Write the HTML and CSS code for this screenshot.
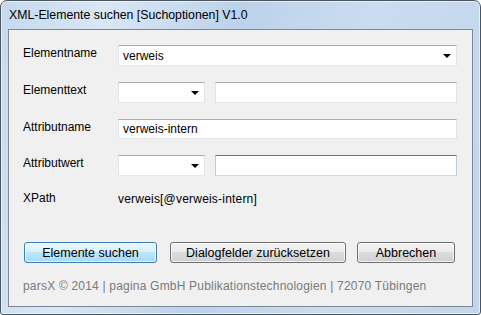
FILE: index.html
```html
<!DOCTYPE html>
<html>
<head>
    <title>XML-Elemente suchen</title>
    <link rel="stylesheet" href="styles.css">
</head>
<body>
    <div class="window">
        <div class="titleBar">XML-Elemente suchen [Suchoptionen] V1.0</div>
        <div class="client">
            <div class="formGrid">
                <label class="fieldLabel">Elementname</label>
                <div class="combo wide">
                    <span class="comboText">verweis</span>
                    <span class="arrow"></span>
                </div>

                <label class="fieldLabel">Elementtext</label>
                <div class="pair">
                    <div class="combo small"><span class="comboText"></span><span class="arrow"></span></div>
                    <div class="textBox"></div>
                </div>

                <label class="fieldLabel">Attributname</label>
                <div class="textBox short">verweis-intern</div>

                <label class="fieldLabel">Attributwert</label>
                <div class="pair">
                    <div class="combo small"><span class="comboText"></span><span class="arrow"></span></div>
                    <div class="textBox focused"></div>
                </div>

                <label class="fieldLabel xpathRow">XPath</label>
                <div class="xpathValue xpathRow">verweis[@verweis-intern]</div>
            </div>

            <div class="buttonRow">
                <button class="btn default btnSearch">Elemente suchen</button>
                <button class="btn btnReset">Dialogfelder zurücksetzen</button>
                <button class="btn btnCancel">Abbrechen</button>
            </div>

            <div class="footer">parsX © 2014 | pagina GmbH Publikationstechnologien | 72070 Tübingen</div>
        </div>
    </div>
</body>
</html>
```
FILE: styles.css
```css
body {
    margin: 0;
    padding: 0;
    background-color: #ffffff;
    font-family: 'Liberation Sans', Arial, sans-serif;
    font-size: 12px;
}

.window {
    width: 481px;
    height: 315px;
    box-sizing: border-box;
    border: 1px solid #4b5560;
    border-radius: 7px 7px 3px 3px;
    background: linear-gradient(100deg, #c6d9ee 0%, #d9e7f5 20%, #bcd2ea 45%, #cadcef 70%, #c2d6ec 100%);
    box-shadow: inset 0 0 0 1px rgba(255, 255, 255, 0.6);
    padding: 0 7px 7px 7px;
    display: flex;
    flex-direction: column;
}

.titleBar {
    height: 28px;
    line-height: 29px;
    padding-left: 1px;
    color: #000;
    font-size: 12.3px;
    flex-shrink: 0;
}

.client {
    flex: 1;
    background-color: #f0f0f0;
    border: 1px solid #7d8894;
    padding: 15px 15px 0 14px;
    box-sizing: border-box;
}

.formGrid {
    display: grid;
    grid-template-columns: 95px 1fr;
    grid-template-rows: 21px 21px 20px 21px 21px;
    row-gap: 16px;
    align-items: center;
}

.fieldLabel {
    color: #000;
    align-self: start;
    line-height: 17px;
}

.xpathRow {
    margin-top: -8px;
    align-self: center;
}

.combo,
.textBox {
    height: 100%;
    box-sizing: border-box;
    background-color: #fff;
    border: 1px solid #e2e3ea;
    border-top-color: #abadb3;
    border-bottom-color: #e3e9ef;
    display: flex;
    align-items: center;
    padding-left: 4px;
}

.textBox.focused {
    border-color: #c5daed;
    border-top-color: #3d7bad;
    border-left-color: #b5cfe7;
    border-right-color: #b5cfe7;
}

.combo {
    justify-content: space-between;
    padding-right: 5px;
}

.arrow {
    width: 0;
    height: 0;
    border-left: 4px solid transparent;
    border-right: 4px solid transparent;
    border-top: 4px solid #000;
}

.pair {
    display: grid;
    grid-template-columns: 87px 1fr;
    column-gap: 10px;
    height: 100%;
}

.xpathValue {
    letter-spacing: 0.2px;
}

.buttonRow {
    display: flex;
    margin-top: 29px;
    padding-left: 1px;
}

.btn {
    height: 21px;
    font-family: 'Liberation Sans', Arial, sans-serif;
    font-size: 12.5px;
    color: #000;
    border: 1px solid #707070;
    border-radius: 3px;
    background: linear-gradient(to bottom, #f2f2f2 0%, #ebebeb 49%, #dddddd 50%, #cfcfcf 100%);
    box-shadow: inset 0 0 0 1px rgba(255, 255, 255, 0.7);
    padding: 0;
}

.btn.default {
    border-color: #3c7fb1;
    background: linear-gradient(to bottom, #eaf6fd 0%, #d9f0fc 49%, #bee6fd 50%, #a7d9f5 100%);
}

.btnSearch {
    width: 133px;
}

.btnReset {
    width: 176px;
    margin-left: 13px;
}

.btnCancel {
    width: 98px;
    margin-left: 11px;
}

.footer {
    margin-top: 15px;
    color: #7a7a7a;
    line-height: 16px;
    letter-spacing: 0.2px;
}
```
